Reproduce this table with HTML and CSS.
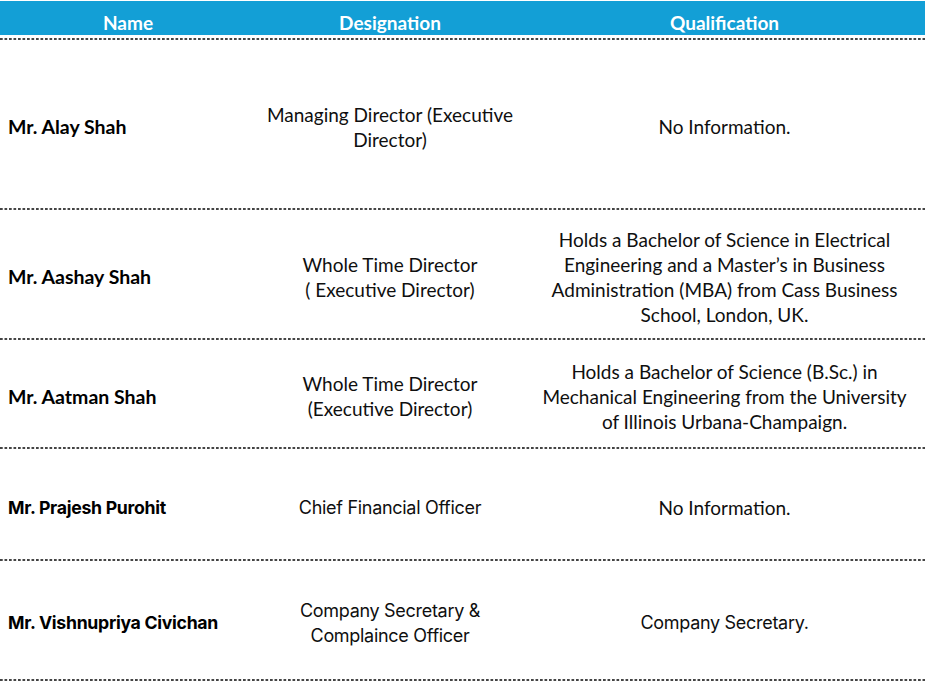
FILE: index.html
```html
<!DOCTYPE html>
<html lang="en">
<head>
<meta charset="utf-8">
<title>Key Managerial Personnel</title>
<link rel="stylesheet" href="styles.css">
</head>
<body>
<div class="table">
  <div class="row head">
    <div class="cell">Name</div>
    <div class="cell">Designation</div>
    <div class="cell">Qualification</div>
  </div>
  <div class="rule"></div>

  <div class="row r1">
    <div class="cell name">Mr. Alay Shah</div>
    <div class="cell">Managing Director (Executive<br>Director)</div>
    <div class="cell qual">No Information.</div>
  </div>
  <div class="rule"></div>

  <div class="row r2">
    <div class="cell name">Mr. Aashay Shah</div>
    <div class="cell">Whole Time Director<br>( Executive Director)</div>
    <div class="cell qual">Holds a Bachelor of Science in Electrical<br>Engineering and a Master’s in Business<br>Administration (MBA) from Cass Business<br>School, London, UK.</div>
  </div>
  <div class="rule"></div>

  <div class="row r3">
    <div class="cell name">Mr. Aatman Shah</div>
    <div class="cell">Whole Time Director<br>(Executive Director)</div>
    <div class="cell qual">Holds a Bachelor of Science (B.Sc.) in<br>Mechanical Engineering from the University<br>of Illinois Urbana-Champaign.</div>
  </div>
  <div class="rule"></div>

  <div class="row r4 alt">
    <div class="cell name">Mr. Prajesh Purohit</div>
    <div class="cell">Chief Financial Officer</div>
    <div class="cell qual classic">No Information.</div>
  </div>
  <div class="rule"></div>

  <div class="row r5 alt">
    <div class="cell name">Mr. Vishnupriya Civichan</div>
    <div class="cell">Company Secretary &amp;<br>Complaince Officer</div>
    <div class="cell qual">Company Secretary.</div>
  </div>
  <div class="rule"></div>
</div>
</body>
</html>
```
FILE: styles.css
```css
html, body {
  margin: 0;
  padding: 0;
  background: #ffffff;
}

body {
  font-family: Lato, "Open Sans", sans-serif;
  font-size: 19px;
  line-height: 25px;
  color: #0f0f0f;
}

.table {
  width: 925px;
  padding-top: 1px;
  display: flex;
  flex-direction: column;
}

.row {
  display: grid;
  grid-template-columns: 256px 268px 1fr;
  align-items: center;
  padding-top: 5px;
  box-sizing: border-box;
}

.cell {
  text-align: center;
  white-space: nowrap;
}

.cell.name {
  text-align: left;
  padding-left: 8px;
  font-weight: 700;
  font-size: 19.5px;
  color: #000000;
}

.head {
  background: #139fd6;
  height: 34px;
  padding-top: 8px;
  color: #ffffff;
  font-weight: 700;
  font-size: 19px;
}

.rule {
  height: 2px;
  background-image: linear-gradient(to right, #444444 0, #444444 3px, transparent 3px);
  background-size: 4.5px 2px;
  background-repeat: repeat-x;
}

.head + .rule {
  margin-top: 3px;
}

.r1 { height: 168px; }
.r2 { height: 128px; }
.r3 { height: 107px; }
.r4 { height: 110px; padding-top: 7px; }
.r5 { height: 118px; }

.alt .cell {
  font-family: Inter, Roboto, sans-serif;
  font-size: 18px;
  letter-spacing: -0.3px;
}

.alt .cell.name {
  font-size: 17.7px;
}

.alt .cell.classic {
  font-family: Lato, "Open Sans", sans-serif;
  font-size: 19px;
  letter-spacing: 0;
}
```
